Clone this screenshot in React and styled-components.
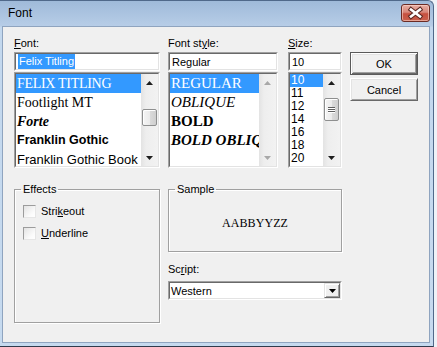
import React from "react";
import styled, { createGlobalStyle } from "styled-components";

const GlobalStyle = createGlobalStyle`
  html, body {
    margin: 0;
    padding: 0;
    background: #eef2f7;
  }
  body {
    font-family: "Liberation Sans", Arial, sans-serif;
    font-size: 11px;
    color: #000;
  }
  * {
    box-sizing: border-box;
  }
`;

const Window = styled.div`
  width: 434px;
  height: 347px;
  display: flex;
  flex-direction: column;
  padding: 0 3px 3px 2px;
  background: linear-gradient(to bottom, #9fbad9 0px, #b7cde7 25px, #c3d8ee 26px, #c6daef 100%);
  border-top: 1px solid #50698a;
  border-right: 1px solid #50698a;
  border-bottom: 1px solid #2f3b4c;
  border-top-right-radius: 6px;
`;

const TitleBar = styled.div`
  height: 25px;
  flex-shrink: 0;
  display: flex;
  align-items: flex-start;
  justify-content: space-between;
  padding-left: 6px;
`;

const Title = styled.div`
  height: 25px;
  line-height: 25px;
  font-size: 12px;
  color: #000;
`;

const CloseButton = styled.div`
  width: 29px;
  height: 18px;
  margin-top: 3px;
  border: 1px solid #6b2b24;
  border-radius: 3px;
  background: linear-gradient(to bottom, #e7aea3 0%, #d8877a 45%, #c6503f 55%, #c9604d 100%);
  box-shadow: inset 0 0 0 1px rgba(255, 220, 210, 0.55);
  display: flex;
  align-items: center;
  justify-content: center;
`;

const Client = styled.div`
  flex: 1;
  background: #f0f0f0;
  border: 1px solid #8fa4bf;
  padding: 10px 0 0 11px;
  display: flex;
  flex-direction: column;
`;

const TopRow = styled.div`
  display: flex;
  align-items: flex-start;
`;

const Column = styled.div`
  width: ${(p) => p.$w}px;
  margin-left: ${(p) => p.$ml || 0}px;
  display: flex;
  flex-direction: column;
`;

const Label = styled.div`
  height: 13px;
  line-height: 13px;
  margin-top: ${(p) => p.$mt || 0}px;
  margin-bottom: ${(p) => (p.$mb === undefined ? 2 : p.$mb)}px;
  white-space: nowrap;
`;

const Mn = styled.span`
  text-decoration: underline;
`;

const SunkenOuter = styled.div`
  height: ${(p) => p.$h}px;
  margin-bottom: ${(p) => p.$mb || 0}px;
  border: 1px solid;
  border-color: #a0a0a0 #ffffff #ffffff #a0a0a0;
`;

const SunkenInner = styled.div`
  height: 100%;
  border: 1px solid;
  border-color: #696969 #e3e3e3 #e3e3e3 #696969;
  background: #fff;
  display: flex;
  overflow: hidden;
`;

const FieldText = styled.div`
  flex: 1;
  padding-left: 2px;
  display: flex;
  align-items: center;
  white-space: nowrap;
`;

const Selected = styled.span`
  background: #3399ff;
  color: #fff;
  padding: 1px 1px;
  line-height: 13px;
`;

const Items = styled.div`
  flex: 1;
  min-width: 0;
  display: flex;
  flex-direction: column;
  overflow: hidden;
`;

const Row = styled.div`
  height: ${(p) => p.$h}px;
  line-height: ${(p) => p.$h}px;
  flex-shrink: 0;
  padding-left: 1px;
  white-space: nowrap;
  overflow: hidden;
  font-family: ${(p) => p.$family || '"Liberation Sans", Arial, sans-serif'};
  font-size: ${(p) => p.$size || 11}px;
  font-weight: ${(p) => p.$weight || 400};
  font-style: ${(p) => (p.$italic ? "italic" : "normal")};
  letter-spacing: ${(p) => p.$spacing || 0}px;
  background: ${(p) => (p.$selected ? "#3399ff" : "transparent")};
  color: ${(p) => (p.$selected ? "#fff" : "#000")};
`;

const ScrollBar = styled.div`
  width: 17px;
  flex-shrink: 0;
  display: flex;
  flex-direction: column;
  background: linear-gradient(to right, #e3e3e3 0%, #eeeeee 30%, #f2f2f2 100%);
`;

const ArrowBox = styled.div`
  height: 17px;
  flex-shrink: 0;
  display: flex;
  align-items: center;
  justify-content: center;
`;

const Track = styled.div`
  flex: 1;
  padding: 0 1px;
`;

const Thumb = styled.div`
  margin-top: ${(p) => p.$top}px;
  height: ${(p) => p.$h}px;
  border: 1px solid #8e8f8f;
  border-radius: 2px;
  background: linear-gradient(to right, #f5f5f5 0%, #ebebeb 50%, #dbdbdb 51%, #cfcfcf 100%);
  box-shadow: inset 1px 1px 0 #ffffff;
  display: flex;
  flex-direction: column;
  align-items: center;
  justify-content: center;
  gap: 1px;
`;

const GripLine = styled.div`
  width: 7px;
  height: 1px;
  background: #5f5f5f;
  box-shadow: 0 1px 0 #fff;
`;

const Arrow = ({ down, color = "#000" }) => (
  <svg width="7" height="4" viewBox="0 0 7 4">
    <path d={down ? "M0 0 L7 0 L3.5 4 Z" : "M0 4 L7 4 L3.5 0 Z"} fill={color} />
  </svg>
);

const VScroll = ({ thumbTop, thumbHeight, grip, disabled }) => {
  const c = disabled ? "#a8a8a8" : "#1e1e1e";
  return (
    <ScrollBar>
      <ArrowBox>
        <Arrow color={c} />
      </ArrowBox>
      <Track>
        {!disabled && (
          <Thumb $top={thumbTop} $h={thumbHeight}>
            {grip && (
              <>
                <GripLine />
                <GripLine />
                <GripLine />
              </>
            )}
          </Thumb>
        )}
      </Track>
      <ArrowBox>
        <Arrow down color={c} />
      </ArrowBox>
    </ScrollBar>
  );
};

const PushButton = styled.div`
  height: 23px;
  margin-bottom: 3px;
  display: flex;
  align-items: center;
  justify-content: center;
  background: #f0f0f0;
  border: 1px solid;
  border-color: ${(p) => (p.$default ? "#5a5a5a" : "#ffffff #696969 #696969 #ffffff")};
  box-shadow: ${(p) =>
    p.$default
      ? "inset 1px 1px 0 #ffffff, inset -1px -1px 0 #696969, inset 2px 2px 0 #e3e3e3, inset -2px -2px 0 #a0a0a0"
      : "inset 1px 1px 0 #e3e3e3, inset -1px -1px 0 #a0a0a0"};
`;

const BottomRow = styled.div`
  display: flex;
  align-items: flex-start;
  margin-top: 15px;
`;

const GroupBox = styled.fieldset`
  margin: 0;
  padding: 0;
  min-width: 0;
  width: ${(p) => p.$w}px;
  height: ${(p) => p.$h}px;
  border: 1px solid #a0a0a0;
  box-shadow: 1px 1px 0 #ffffff, inset 1px 1px 0 #ffffff;
`;

const Legend = styled.legend`
  margin-left: 6px;
  padding: 0 2px;
  line-height: 12px;
  font-size: 11px;
`;

const EffectsBody = styled.div`
  padding: 10px 0 0 8px;
  display: flex;
  flex-direction: column;
  gap: 9px;
`;

const CheckRow = styled.div`
  display: flex;
  align-items: center;
  gap: 5px;
  height: 13px;
  line-height: 13px;
`;

const CheckBox = styled.div`
  width: 13px;
  height: 13px;
  border: 1px solid;
  border-color: #9c9c9c #e6e6e6 #e6e6e6 #9c9c9c;
  background: linear-gradient(135deg, #e3e3e3 0%, #fbfbfb 70%, #ffffff 100%);
`;

const SampleBody = styled.div`
  height: 56px;
  display: flex;
  align-items: center;
  justify-content: center;
`;

const SampleText = styled.span`
  font-family: "Liberation Serif", "Times New Roman", serif;
  font-size: 12px;
  letter-spacing: 0.1px;
`;

const ComboText = styled.div`
  flex: 1;
  padding-left: 1px;
  display: flex;
  align-items: center;
`;

const DropButton = styled.div`
  width: 16px;
  height: 100%;
  display: flex;
  align-items: center;
  justify-content: center;
  background: #f0f0f0;
  border: 1px solid;
  border-color: #e3e3e3 #696969 #696969 #e3e3e3;
  box-shadow: inset 1px 1px 0 #ffffff, inset -1px -1px 0 #a0a0a0;
`;

const fonts = [
  { name: "FELIX TITLING", $family: '"Liberation Serif", serif', $size: 14, $spacing: -0.3, $selected: true },
  { name: "Footlight MT", $family: '"Liberation Serif", serif', $size: 14 },
  { name: "Forte", $family: '"Liberation Serif", serif', $size: 14, $weight: 700, $italic: true },
  { name: "Franklin Gothic", $family: '"Liberation Sans", sans-serif', $size: 12.5, $weight: 700 },
  { name: "Franklin Gothic Book", $family: '"Liberation Sans", sans-serif', $size: 13 },
];

const styles = [
  { name: "REGULAR", $selected: true },
  { name: "OBLIQUE", $italic: true },
  { name: "BOLD", $weight: 700 },
  { name: "BOLD OBLIQUE", $weight: 700, $italic: true },
];

const sizes = ["10", "11", "12", "14", "16", "18", "20"];

export default function App() {
  return (
    <>
      <GlobalStyle />
      <Window>
        <TitleBar>
          <Title>Font</Title>
          <CloseButton>
            <svg width="27" height="16" viewBox="0 0 27 16">
              <path d="M9 4.5 L18 11.5 M18 4.5 L9 11.5" stroke="#5a2620" strokeWidth="4.6" strokeLinecap="square" />
              <path d="M9 4.5 L18 11.5 M18 4.5 L9 11.5" stroke="#ffffff" strokeWidth="2.6" strokeLinecap="square" />
            </svg>
          </CloseButton>
        </TitleBar>
        <Client>
          <TopRow>
            <Column $w={146}>
              <Label>
                <Mn>F</Mn>ont:
              </Label>
              <SunkenOuter $h={19} $mb={1}>
                <SunkenInner>
                  <FieldText>
                    <Selected>Felix Titling</Selected>
                  </FieldText>
                </SunkenInner>
              </SunkenOuter>
              <SunkenOuter $h={96}>
                <SunkenInner>
                  <Items>
                    {fonts.map(({ name, ...rest }) => (
                      <Row key={name} $h={19} {...rest}>
                        {name}
                      </Row>
                    ))}
                  </Items>
                  <VScroll thumbTop={18} thumbHeight={17} />
                </SunkenInner>
              </SunkenOuter>
            </Column>
            <Column $w={110} $ml={8}>
              <Label>
                Font st<Mn>y</Mn>le:
              </Label>
              <SunkenOuter $h={19} $mb={1}>
                <SunkenInner>
                  <FieldText>Regular</FieldText>
                </SunkenInner>
              </SunkenOuter>
              <SunkenOuter $h={96}>
                <SunkenInner>
                  <Items>
                    {styles.map(({ name, ...rest }) => (
                      <Row key={name} $h={19} $family='"Liberation Serif", serif' $size={15} {...rest}>
                        {name}
                      </Row>
                    ))}
                  </Items>
                  <VScroll disabled />
                </SunkenInner>
              </SunkenOuter>
            </Column>
            <Column $w={54} $ml={10}>
              <Label>
                <Mn>S</Mn>ize:
              </Label>
              <SunkenOuter $h={19} $mb={1}>
                <SunkenInner>
                  <FieldText>10</FieldText>
                </SunkenInner>
              </SunkenOuter>
              <SunkenOuter $h={96}>
                <SunkenInner>
                  <Items>
                    {sizes.map((s, i) => (
                      <Row key={s} $h={13} $size={12} $selected={i === 0}>
                        {s}
                      </Row>
                    ))}
                  </Items>
                  <VScroll thumbTop={7} thumbHeight={23} grip />
                </SunkenInner>
              </SunkenOuter>
            </Column>
            <Column $w={68} $ml={8}>
              <Label $mb={2} />
              <PushButton $default>OK</PushButton>
              <PushButton>Cancel</PushButton>
            </Column>
          </TopRow>
          <BottomRow>
            <GroupBox $w={146} $h={140}>
              <Legend>Effects</Legend>
              <EffectsBody>
                <CheckRow>
                  <CheckBox />
                  <span>
                    Stri<Mn>k</Mn>eout
                  </span>
                </CheckRow>
                <CheckRow>
                  <CheckBox />
                  <span>
                    <Mn>U</Mn>nderline
                  </span>
                </CheckRow>
              </EffectsBody>
            </GroupBox>
            <Column $w={174} $ml={8}>
              <GroupBox $w={174} $h={69}>
                <Legend>Sample</Legend>
                <SampleBody>
                  <SampleText>AABBYYZZ</SampleText>
                </SampleBody>
              </GroupBox>
              <Label $mt={11} $mb={5}>
                Sc<Mn>r</Mn>ipt:
              </Label>
              <SunkenOuter $h={19}>
                <SunkenInner>
                  <ComboText>Western</ComboText>
                  <DropButton>
                    <Arrow down />
                  </DropButton>
                </SunkenInner>
              </SunkenOuter>
            </Column>
          </BottomRow>
        </Client>
      </Window>
    </>
  );
}
